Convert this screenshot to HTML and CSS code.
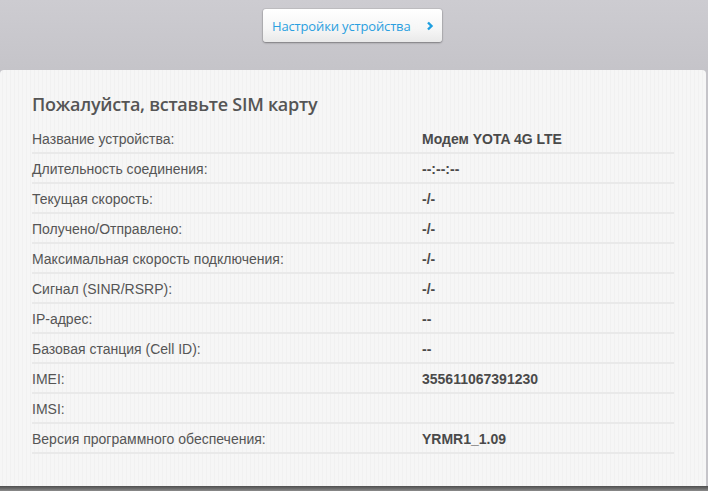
FILE: index.html
```html
<!DOCTYPE html>
<html>
<head>
<meta charset="utf-8">
<link rel="stylesheet" href="styles.css">
</head>
<body>
<div class="top">
  <a class="settings-btn" href="#">
    <span class="btn-text">Настройки устройства</span>
    <svg class="chev" width="8" height="10" viewBox="0 0 8 10"><path d="M2 1.5 L5.5 5 L2 8.5" fill="none" stroke="#1f9fe0" stroke-width="2.4"/></svg>
  </a>
</div>
<div class="card">
  <h1 class="title">Пожалуйста, вставьте SIM карту</h1>
  <div class="rows">
    <div class="row"><span class="label">Название устройства:</span><span class="value">Модем YOTA 4G LTE</span></div>
    <div class="row"><span class="label">Длительность соединения:</span><span class="value">--:--:--</span></div>
    <div class="row"><span class="label">Текущая скорость:</span><span class="value">-/-</span></div>
    <div class="row"><span class="label">Получено/Отправлено:</span><span class="value">-/-</span></div>
    <div class="row"><span class="label">Максимальная скорость подключения:</span><span class="value">-/-</span></div>
    <div class="row"><span class="label">Сигнал (SINR/RSRP):</span><span class="value">-/-</span></div>
    <div class="row"><span class="label">IP-адрес:</span><span class="value">--</span></div>
    <div class="row"><span class="label">Базовая станция (Cell ID):</span><span class="value">--</span></div>
    <div class="row"><span class="label">IMEI:</span><span class="value">355611067391230</span></div>
    <div class="row"><span class="label">IMSI:</span><span class="value"></span></div>
    <div class="row"><span class="label">Версия программного обеспечения:</span><span class="value">YRMR1_1.09</span></div>
  </div>
</div>
<div class="bottom"></div>
</body>
</html>
```
FILE: styles.css
```css
html, body {
  margin: 0;
  padding: 0;
}
body {
  width: 708px;
  height: 491px;
  overflow: hidden;
  background: linear-gradient(#cdccd1, #c5c4c9 70px);
  font-family: "Liberation Sans", Arial, sans-serif;
}
.top {
  height: 70px;
  display: flex;
  justify-content: flex-start;
  padding-left: 263px;
  box-sizing: border-box;
  padding-top: 9px;
}
.settings-btn {
  display: flex;
  align-items: center;
  width: 179px;
  height: 33px;
  box-sizing: border-box;
  padding: 0 8px 0 9px;
  border-radius: 3px;
  background: linear-gradient(#ffffff, #f6f6f6 60%, #e9e9e9);
  box-shadow: 0 1px 2px rgba(0,0,0,0.35), 0 0 0 1px rgba(0,0,0,0.06);
  text-decoration: none;
  justify-content: space-between;
}
.btn-text {
  color: #2a9fe0;
  font-family: "Open Sans", sans-serif;
  font-size: 13px;
  letter-spacing: -0.15px;
}
.card {
  width: 706px;
  height: 416px;
  box-sizing: border-box;
  border-radius: 4px 4px 0 0;
  background: repeating-linear-gradient(90deg, #f6f6f6 0 2px, #f1f1f1 2px 3px, #f6f6f6 3px 4px);
  padding: 22px 32px 0 32px;
}
.title {
  margin: 0 0 8px 0;
  font-family: "Open Sans", sans-serif;
  font-weight: 600;
  font-size: 18px;
  color: #555555;
  letter-spacing: -0.25px;
  line-height: 24px;
}
.rows {
  width: 642px;
}
.row {
  display: flex;
  height: 30px;
  align-items: center;
  border-bottom: 2px solid #e9e9e9;
  box-sizing: border-box;
  font-size: 14px;
  padding-top: 1px;
}
.label {
  width: 390px;
  color: #555555;
}
.value {
  color: #4a4a4a;
  font-weight: bold;
}
.bottom {
  height: 5px;
  background: linear-gradient(#4e4e4e, #6a6a6a 50%, #8c8c8c);
}
```
